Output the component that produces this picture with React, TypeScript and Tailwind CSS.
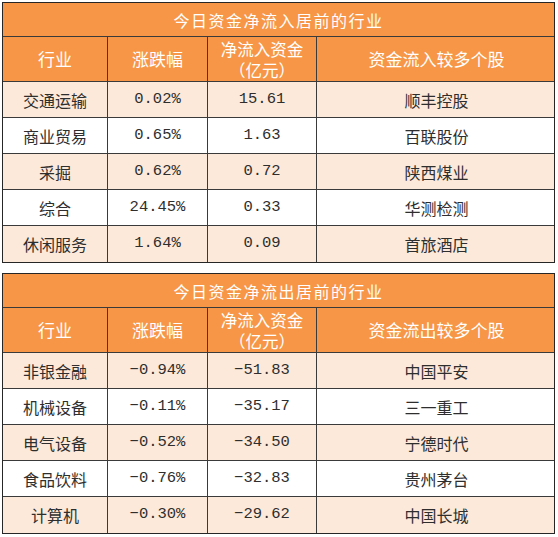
import React from 'react';

type Row = [string, string, string, string];

const inflow: Row[] = [
  ['交通运输', '0.02%', '15.61', '顺丰控股'],
  ['商业贸易', '0.65%', '1.63', '百联股份'],
  ['采掘', '0.62%', '0.72', '陕西煤业'],
  ['综合', '24.45%', '0.33', '华测检测'],
  ['休闲服务', '1.64%', '0.09', '首旅酒店'],
];

const outflow: Row[] = [
  ['非银金融', '-0.94%', '-51.83', '中国平安'],
  ['机械设备', '-0.11%', '-35.17', '三一重工'],
  ['电气设备', '-0.52%', '-34.50', '宁德时代'],
  ['食品饮料', '-0.76%', '-32.83', '贵州茅台'],
  ['计算机', '-0.30%', '-29.62', '中国长城'],
];

const cjk = "font-['Noto_Sans_CJK_SC',sans-serif]";
const mono = "font-['Liberation_Mono','DejaVu_Sans_Mono',monospace]";
const cols = 'grid grid-cols-[105px_100px_109px_239px]';

const MoneyTable: React.FC<{ title: string; lastHead: string; rows: Row[] }> = ({ title, lastHead, rows }) => (
  <div className="w-[553px] border border-[#262626] text-[#2e2e2e]">
    <div className={`h-[34px] bg-[#f79646] text-white text-[16px] tracking-[1.5px] flex items-center justify-center border-b border-[#3a3a3a] ${cjk}`}>
      {title}
    </div>
    <div className={`${cols} h-[45px] bg-[#f79646] text-white text-[17px] border-b border-[#3a3a3a] ${cjk}`}>
      <div className="flex items-center justify-center border-r border-[#3a3a3a]">行业</div>
      <div className="flex items-center justify-center border-r border-[#3a3a3a]">涨跌幅</div>
      <div className="flex items-center justify-center pt-[2px] border-r border-[#3a3a3a]">
        <p className="whitespace-pre-line text-center leading-[21px] text-[16.5px]">{'净流入资金\n（亿元）'}</p>
      </div>
      <div className="flex items-center justify-center">{lastHead}</div>
    </div>
    {rows.map((r, i) => (
      <div
        key={r[0]}
        className={`${cols} h-[36px] ${i % 2 === 0 ? 'bg-[#fde9d9]' : 'bg-white'} ${i < rows.length - 1 ? 'border-b border-[#3a3a3a]' : ''}`}
      >
        <div className={`flex items-center justify-center border-r border-[#3a3a3a] text-[16px] ${cjk}`}>{r[0]}</div>
        <div className={`flex items-center justify-center border-r border-[#3a3a3a] text-[15.5px] ${mono}`}>{r[1].replace('-', '−')}</div>
        <div className={`flex items-center justify-center border-r border-[#3a3a3a] text-[15.5px] ${mono}`}>{r[2].replace('-', '−')}</div>
        <div className={`flex items-center justify-center text-[16px] ${cjk}`}>{r[3]}</div>
      </div>
    ))}
  </div>
);

export default function App() {
  return (
    <div className="w-[558px] h-[537px] bg-white pt-[2px] pl-[2px] flex flex-col gap-[10px]">
      <MoneyTable title="今日资金净流入居前的行业" lastHead="资金流入较多个股" rows={inflow} />
      <MoneyTable title="今日资金净流出居前的行业" lastHead="资金流出较多个股" rows={outflow} />
    </div>
  );
}
